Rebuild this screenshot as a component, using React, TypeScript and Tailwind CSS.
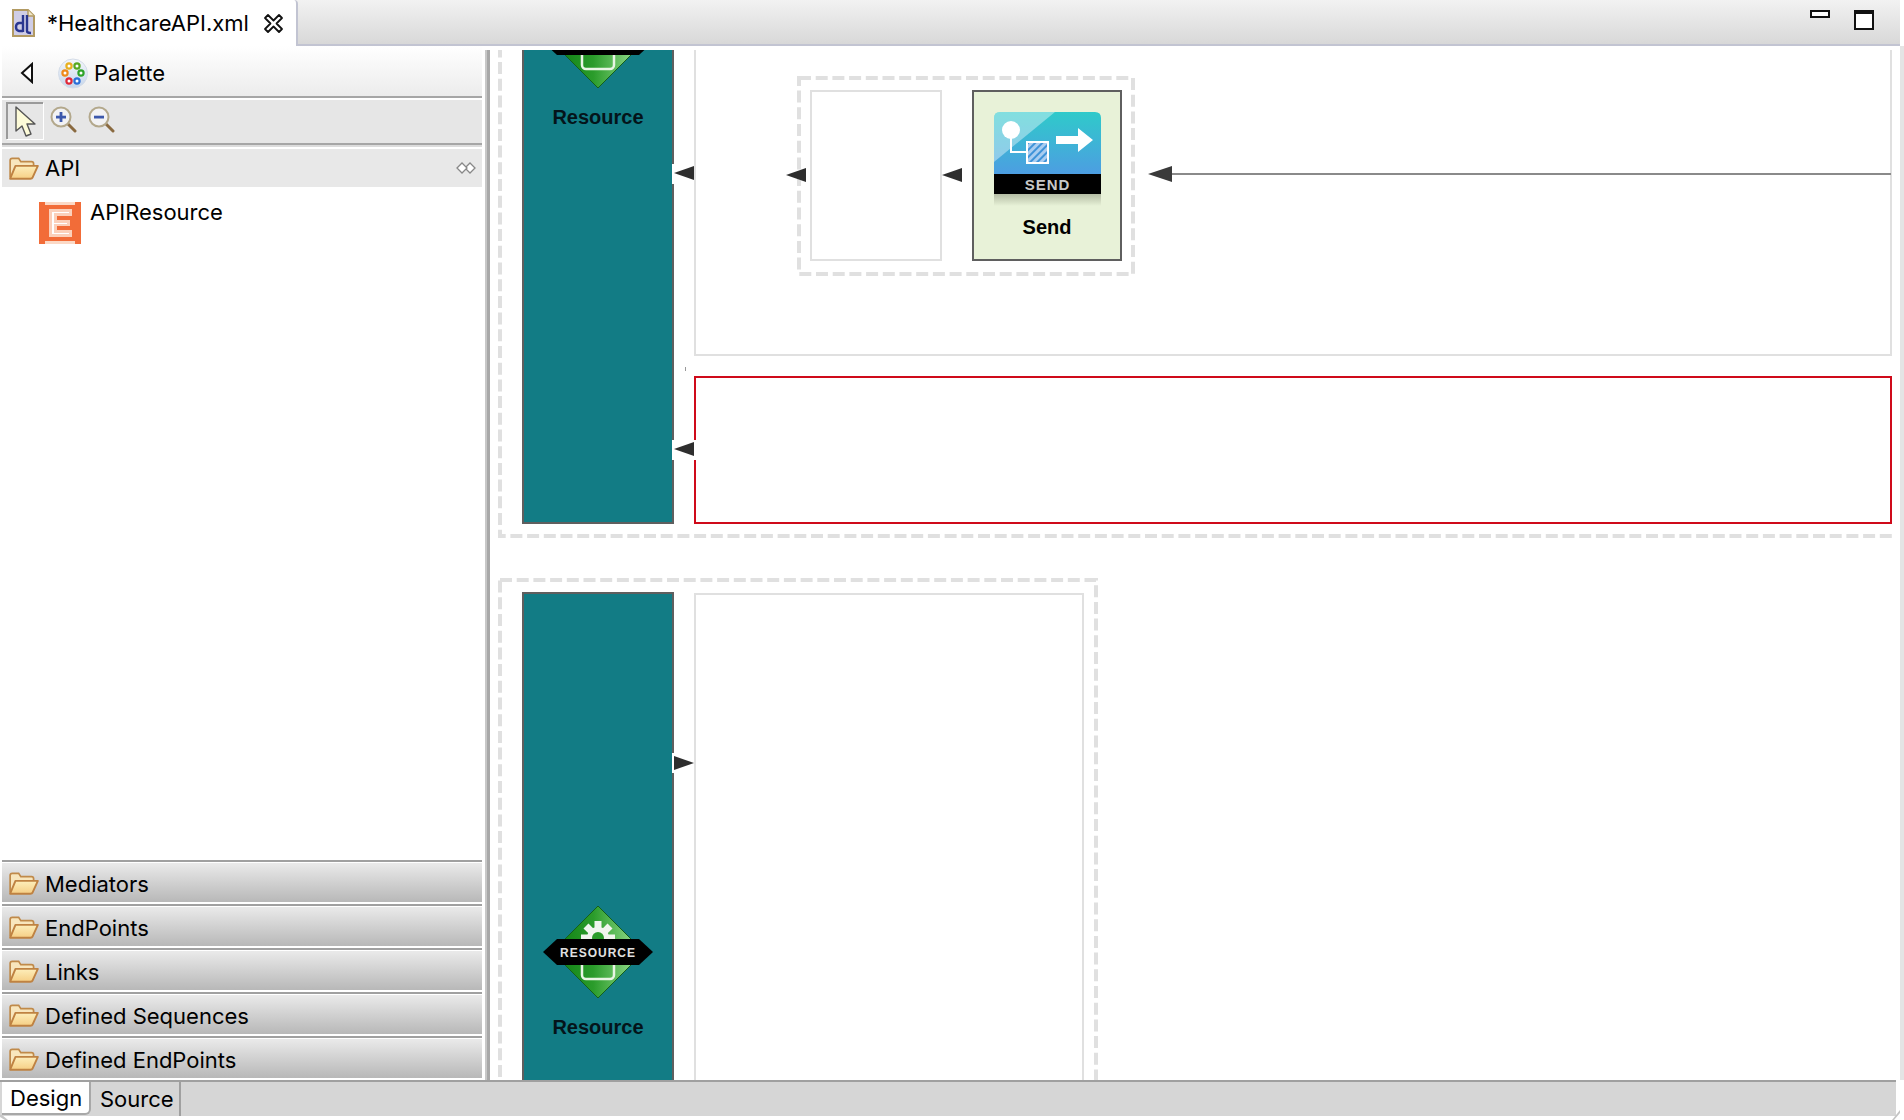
import { ReactNode } from 'react'

const UI_FONT = "[font-family:Inter,'Liberation_Sans',sans-serif]"

const DRAWERS = ['Mediators', 'EndPoints', 'Links', 'Defined Sequences', 'Defined EndPoints']

function FolderIcon() {
  return (
    <svg width="32" height="26" viewBox="0 0 30 24" className="shrink-0">
      <defs>
        <linearGradient id="folderFill" x1="0" y1="0" x2="0" y2="1">
          <stop offset="0" stopColor="#fdeebb" />
          <stop offset="1" stopColor="#f6cf85" />
        </linearGradient>
      </defs>
      <path d="M2 21V5q0-2 2-2h6l2 3h10q2 0 2 2v2" fill="#f8e6bd" stroke="#c08a4a" strokeWidth="1.6" />
      <path d="M2 22 7 10h21l-5 11q-.4 1-2 1H2z" fill="url(#folderFill)" stroke="#bf8242" strokeWidth="1.8" strokeLinejoin="round" />
    </svg>
  )
}

function FileIcon() {
  return (
    <svg width="23" height="28" viewBox="0 0 23 28">
      <path d="M1 1h15l6 6v20H1z" fill="#cfcde6" stroke="#b29a62" strokeWidth="2" />
      <path d="M16 1v6h6" fill="#efe6c8" stroke="#b29a62" strokeWidth="1.4" />
      <path d="M11 6v17M11 22H7q-3-.5-3-4t3-4h4" fill="none" stroke="#2a3690" strokeWidth="2.4" />
      <path d="M15 6v16q0 2 4 2" fill="none" stroke="#2a3690" strokeWidth="2.4" />
    </svg>
  )
}

function CloseIcon() {
  return (
    <svg width="21" height="21" viewBox="0 0 21 21">
      <path
        d="M2 5 5 2l5.500 5.500L16 2l3 3-5.500 5.500L19 16l-3 3-5.500-5.500L5 19l-3-3 5.500-5.500z"
        fill="#fff"
        stroke="#111"
        strokeWidth="1.800"
        strokeLinejoin="round"
      />
    </svg>
  )
}

function PaletteIcon() {
  const dots = [
    [11, 8, '#e8b020'], [19, 8, '#58a820'], [7, 15, '#ee8a1c'], [23, 15, '#2fa42a'],
    [11, 23, '#e02838'], [19, 23, '#2a6fd8'],
  ] as const
  return (
    <svg width="30" height="31" viewBox="0 0 30 31">
      <defs>
        <linearGradient id="paletteFill" x1="0" y1="0" x2="0" y2="1">
          <stop offset="0" stopColor="#f4f6fa" />
          <stop offset="1" stopColor="#c6d6ec" />
        </linearGradient>
      </defs>
      <circle cx="15" cy="15.500" r="14.500" fill="url(#paletteFill)" stroke="#d4dce8" />
      {dots.map(([cx, cy, color]) => (
        <circle key={`${cx}-${cy}`} cx={cx} cy={cy} r="2.600" fill="#fff" stroke={color} strokeWidth="2.200" />
      ))}
    </svg>
  )
}

function PointerIcon() {
  return (
    <svg width="24" height="34" viewBox="0 0 24 34">
      <path d="M2 2v24l6-5 4 10 5-2-4-10h8z" fill="#fdfbd8" stroke="#555" strokeWidth="1.400" strokeLinejoin="round" />
    </svg>
  )
}

function ZoomIcon({ plus }: { plus?: boolean }) {
  return (
    <svg width="27" height="27" viewBox="0 0 27 27">
      <path d="M17 17l8 8" stroke="#8a6a40" strokeWidth="3" strokeLinecap="round" />
      <circle cx="11" cy="11" r="9.500" fill="#f2f2f4" stroke="#b3a88c" strokeWidth="2" />
      <rect x="6" y="9.700" width="10" height="2.800" fill="#3c58ac" />
      {plus && <rect x="9.600" y="6" width="2.800" height="10" fill="#3c58ac" />}
    </svg>
  )
}

function PinIcon() {
  return (
    <svg width="20" height="14" viewBox="0 0 20 14">
      <path d="M9 7l5-5 5 5-5 5z" fill="#fff" stroke="#888" strokeWidth="1.300" />
      <path d="M1 7l5-5 5 5-5 5z" fill="#fff" stroke="#888" strokeWidth="1.300" />
    </svg>
  )
}

function ApiResourceIcon() {
  return (
    <svg width="44" height="42" viewBox="0 0 44 42" className="shrink-0">
      <rect x="1" y="0" width="42" height="42" fill="#f26c38" />
      <rect x="7" y="0" width="30" height="3" fill="#fbd9c6" />
      <rect x="7" y="39" width="30" height="3" fill="#fbd9c6" />
      <path d="M11 7h23v7H19v4h13v6H19v4h15v7H11z" fill="#fbd0ba" />
      <path d="M14 10h17v1H16v10h13v1H16v9h15v1H14z" fill="#fff" />
    </svg>
  )
}

function GearTeeth() {
  const angles = [0, 45, 90, 135, 180, 225, 270, 315]
  return (
    <>
      {angles.map(a => (
        <rect key={a} x="51.500" y="15" width="7" height="8" fill="#f0f5ee" transform={`rotate(${a} 55 32)`} />
      ))}
    </>
  )
}

function ResourceIcon({ showText = true }: { showText?: boolean }) {
  return (
    <svg width="110" height="92" viewBox="0 0 110 92" className="shrink-0">
      <defs>
        <linearGradient id="resourceFill" x1="0" y1="0" x2="1" y2="0">
          <stop offset="0" stopColor="#0b7d10" />
          <stop offset=".45" stopColor="#2b9c2b" />
          <stop offset="1" stopColor="#a8e89e" />
        </linearGradient>
      </defs>
      <path d="M55 0l46 46-46 46L9 46z" fill="url(#resourceFill)" stroke="#14601a" strokeWidth="1" />
      <GearTeeth />
      <circle cx="55" cy="32" r="11" fill="#f0f5ee" />
      <circle cx="55" cy="32" r="6" fill="#2b9c2b" />
      <rect x="39" y="50" width="32" height="23" rx="4" fill="none" stroke="#e8f5e4" strokeWidth="2.500" />
      <path d="M0 46 14 33h82l14 13-14 13H14z" fill="#000" />
      {showText && (
        <text x="55" y="50.500" textAnchor="middle" fontFamily="'Liberation Sans', sans-serif" fontSize="12" fontWeight="700" letterSpacing="1" fill="#e0e0e0">
          RESOURCE
        </text>
      )}
    </svg>
  )
}

function SendIcon() {
  return (
    <svg width="107" height="94" viewBox="0 0 107 94">
      <defs>
        <linearGradient id="sendFill" x1="0" y1="0" x2="0" y2="1">
          <stop offset="0" stopColor="#2fcaca" />
          <stop offset="1" stopColor="#4d9de2" />
        </linearGradient>
        <linearGradient id="sendShadow" x1="0" y1="0" x2="0" y2="1">
          <stop offset="0" stopColor="#b4bca4" />
          <stop offset="1" stopColor="#e8f2d8" />
        </linearGradient>
        <pattern id="sendHatch" width="5" height="5" patternUnits="userSpaceOnUse" patternTransform="rotate(-45)">
          <rect width="5" height="5" fill="#a9cdf0" />
          <rect width="5" height="2" fill="#3f93d8" />
        </pattern>
      </defs>
      <path d="M0 6q0-6 6-6h95q6 0 6 6v57H0z" fill="url(#sendFill)" />
      <path d="M0 6q0-6 6-6h55L0 50z" fill="#fff" opacity=".4" />
      <rect y="62" width="107" height="20" fill="#000" />
      <rect y="82" width="107" height="12" fill="url(#sendShadow)" />
      <circle cx="17" cy="18" r="9" fill="#fff" />
      <path d="M17 26v14h16" fill="none" stroke="#fff" strokeWidth="2" />
      <rect x="33" y="30" width="21" height="21" fill="url(#sendHatch)" stroke="#fff" strokeWidth="2" />
      <path d="M62 24h22v-8l15 12-15 12v-8H62z" fill="#fff" />
      <text x="53.500" y="78" textAnchor="middle" fontFamily="'Liberation Sans', sans-serif" fontSize="15" fontWeight="700" letterSpacing="1" fill="#c8c8c8">
        SEND
      </text>
    </svg>
  )
}

function DashedFrame({ className, width, height }: { className: string; width: number; height: number }) {
  return (
    <svg className={`absolute ${className}`} width={width} height={height}>
      <rect
        x="2"
        y="2"
        width={width - 4}
        height={height - 4}
        fill="none"
        stroke="#e0e0e0"
        strokeWidth="4"
        strokeDasharray="12 4.700"
      />
    </svg>
  )
}

function Arrow({ className, right }: { className: string; right?: boolean }) {
  return (
    <svg className={`absolute ${className}`} width="20" height="16" viewBox="0 0 20 16">
      <path d={right ? 'M20 8 0 1v14z' : 'M0 8 20 1v14z'} fill="#2e2e2e" />
    </svg>
  )
}

function Drawer({ label }: { label: string }) {
  return (
    <div className="h-[44px] border-t-2 border-[#a0a0a0] pt-px pb-[2px]">
      <div className="flex h-[39px] items-center gap-[5px] bg-gradient-to-b from-[#eaeaea] to-[#b8b8b8] pl-[6px]">
        <FolderIcon />
        <span className="mt-[2px] text-[22px] leading-[28px] text-black">{label}</span>
      </div>
    </div>
  )
}

function ResourceBlock({ className, children }: { className: string; children: ReactNode }) {
  return (
    <div className={`absolute left-[31px] flex w-[152px] flex-col items-center overflow-hidden border-2 border-[#5f5f5f] bg-[#127c85] ${className}`}>
      {children}
      <span className="mt-[17px] text-[20px] leading-[24px] font-bold text-[#04141a] [font-family:'Liberation_Sans',sans-serif]">
        Resource
      </span>
    </div>
  )
}

function Palette() {
  return (
    <aside className="flex w-[482px] shrink-0 flex-col pl-[2px]">
      <div className="flex h-[50px] shrink-0 items-center bg-gradient-to-b from-white to-[#ececec] pt-[4px] pl-[18px]">
        <svg width="14" height="22" viewBox="0 0 14 22">
          <path d="M12 2 2 11l10 9z" fill="#fff" stroke="#111" strokeWidth="2" />
        </svg>
        <div className="ml-[24px]">
          <PaletteIcon />
        </div>
        <span className="ml-[6px] text-[22px] leading-[28px] text-black">Palette</span>
      </div>
      <div className="h-[2px] shrink-0 bg-[#a6a6a6]" />
      <div className="flex h-[45px] shrink-0 items-center border-t-2 border-white bg-[#e6e6e6] pb-[5px] pl-[4px]">
        <div className="mt-[3px] flex h-[37px] w-[37px] items-center justify-center border-t-2 border-l-2 border-[#9a9a9a] bg-[#e6e6e6] shadow-[1px_1px_0_#fff]">
          <PointerIcon />
        </div>
        <div className="ml-[7px]">
          <ZoomIcon plus />
        </div>
        <div className="ml-[11px]">
          <ZoomIcon />
        </div>
      </div>
      <div className="h-[2px] shrink-0 bg-[#a6a6a6]" />
      <div className="h-[4px] shrink-0 border-t-2 border-[#dcdcdc]" />
      <div className="flex h-[38px] shrink-0 items-center bg-[#e8e8e8] pr-[6px] pl-[6px]">
        <FolderIcon />
        <span className="ml-[5px] text-[22px] leading-[28px] text-black">API</span>
        <div className="ml-auto">
          <PinIcon />
        </div>
      </div>
      <div className="flex flex-1 items-start gap-[8px] pt-[15px] pl-[36px]">
        <ApiResourceIcon />
        <span className="-mt-[5px] text-[22px] leading-[30px] text-black">APIResource</span>
      </div>
      {DRAWERS.map(label => (
        <Drawer key={label} label={label} />
      ))}
    </aside>
  )
}

function Canvas() {
  return (
    <main className="flex-1 pt-[4px]">
      <div className="relative h-full overflow-hidden">
        <DashedFrame className="top-[-20px] left-[7px]" width={1500} height={508} />
        <DashedFrame className="top-[528px] left-[7px]" width={600} height={600} />
        <div className="absolute top-[470px] left-[1401px] h-[30px] w-[8px] bg-white" />

        <ResourceBlock className="top-[-2px] h-[476px]">
          <div className="-mt-[54px]" />
          <ResourceIcon showText={false} />
        </ResourceBlock>
        <ResourceBlock className="top-[542px] h-[600px]">
          <div className="mt-[312px]" />
          <ResourceIcon />
        </ResourceBlock>

        {/* Resource sequences */}
        <div className="absolute top-[-2px] left-[203px] h-[308px] w-[1198px] border-2 border-[#e0e0e0]" />
        <div className="absolute top-[326px] left-[203px] h-[148px] w-[1198px] border-2 border-[#cf0a1a]" />
        <div className="absolute top-[543px] left-[203px] h-[600px] w-[390px] border-2 border-[#e0e0e0]" />

        {/* Send mediator group */}
        <DashedFrame className="top-[26px] left-[306px]" width={338} height={200} />
        <div className="absolute top-[40px] left-[319px] h-[171px] w-[132px] border-2 border-[#e0e0e0]" />
        <div className="absolute top-[40px] left-[481px] flex h-[171px] w-[150px] flex-col items-center border-2 border-[#5f5f5f] bg-[#e8f2d8] pt-[20px]">
          <SendIcon />
          <span className="mt-[9px] text-[20px] leading-[24px] font-bold text-black [font-family:'Liberation_Sans',sans-serif]">
            Send
          </span>
        </div>

        {/* Connectors */}
        <div className="absolute top-[114px] left-[181px] h-[20px] w-[3px] bg-white" />
        <div className="absolute top-[390px] left-[181px] h-[20px] w-[3px] bg-white" />
        <div className="absolute top-[390px] left-[203px] h-[20px] w-[2px] bg-white" />
        <div className="absolute top-[703px] left-[181px] h-[20px] w-[3px] bg-white" />
        <Arrow className="top-[115px] left-[183px]" />
        <Arrow className="top-[391px] left-[183px]" />
        <Arrow right className="top-[705px] left-[183px]" />
        <Arrow className="top-[117px] left-[295px]" />
        <Arrow className="top-[117px] left-[451px]" />
        <svg className="absolute top-[115px] left-[657px]" width="24" height="18" viewBox="0 0 24 18">
          <path d="M0 9 24 1v16z" fill="#3a3a3a" />
        </svg>
        <div className="absolute top-[123px] left-[681px] h-[2px] w-[719px] bg-[#8a8a8a]" />
        <div className="absolute top-[317px] left-[194px] h-[4px] w-px bg-[#999]" />
      </div>
    </main>
  )
}

export default function App() {
  return (
    <div className={`relative flex h-[1120px] w-[1904px] flex-col overflow-hidden bg-white ${UI_FONT}`}>
      {/* Editor tab bar */}
      <header className="flex h-[46px] w-[1900px] shrink-0 items-start border-b-2 border-[#c2c4d2] bg-gradient-to-b from-[#f2f2f2] to-[#d8d8d8]">
        <div className="flex h-[46px] w-[298px] items-center rounded-tr-[4px] border-r-2 border-[#c2c4d2] bg-white pl-[12px]">
          <FileIcon />
          <span className="ml-[12px] text-[22px] leading-[28px] text-black">*HealthcareAPI.xml</span>
          <div className="ml-auto pr-[12px]">
            <CloseIcon />
          </div>
        </div>
        <div className="mt-[10px] ml-auto h-[8px] w-[20px] border-2 border-[#111] bg-white" />
        <div className="mt-[10px] mr-[26px] ml-[24px] h-[20px] w-[20px] border-2 border-t-4 border-[#111] bg-white" />
      </header>

      <div className="flex min-h-0 flex-1">
        <Palette />
        <div className="flex w-[9px] shrink-0 pt-[4px] pl-[3px]">
          <div className="w-[2px] bg-[#c8c8c8]" />
          <div className="w-[3px] bg-[#a8a8a8]" />
        </div>
        <Canvas />
        <div className="w-[4px] shrink-0 bg-[#e4e4e4]" />
      </div>

      {/* Design / Source tabs */}
      <footer className="flex h-[36px] w-[1896px] shrink-0 border-t-2 border-[#a0a0a0] bg-[#d6d6d6]">
        <div className="ml-[2px] flex h-[33px] w-[89px] items-center rounded-br-[6px] border-r-2 border-b-2 border-[#a8a8a8] bg-white pl-[8px] text-[22px] leading-[28px] text-black">
          Design
        </div>
        <div className="flex h-full w-[90px] items-center border-r-2 border-[#a0a0a0] pl-[9px] text-[22px] leading-[28px] text-black">
          Source
        </div>
      </footer>
      <div className="h-[4px] shrink-0" />

      {/* window corner marks */}
      <svg className="absolute right-[4px] bottom-0" width="8" height="10" viewBox="0 0 8 10">
        <path d="M8 0v3l-6 7H0z" fill="#c4c4c4" />
      </svg>
      <svg className="absolute bottom-0 left-0" width="8" height="5" viewBox="0 0 8 5">
        <path d="M0 0h2l6 5H5L0 2z" fill="#c8c8c8" />
      </svg>
    </div>
  )
}
